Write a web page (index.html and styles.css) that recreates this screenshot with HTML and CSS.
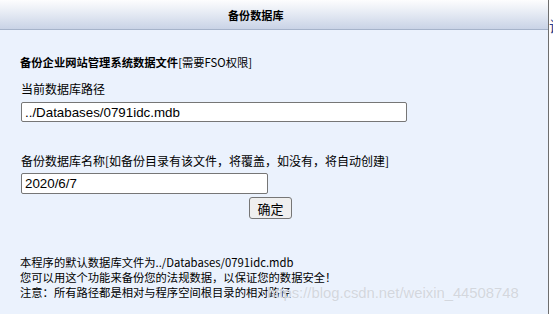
FILE: index.html
```
<!DOCTYPE html>
<html lang="zh-CN">
<head>
<meta charset="utf-8">
<title>备份数据库</title>
<link rel="stylesheet" href="styles.css">
</head>
<body>
<div class="frame">
  <div class="page">
    <div class="header"><span class="title">备份数据库</span></div>
    <div class="content">
      <div class="line"><b>备份企业网站管理系统数据文件</b>[需要FSO权限]</div>
      <div class="line label label1">当前数据库路径</div>
      <input class="field path" type="text" value="../Databases/0791idc.mdb">
      <div class="line label label2">备份数据库名称[如备份目录有该文件，将覆盖，如没有，将自动创建]</div>
      <input class="field name" type="text" value="2020/6/7">
      <div class="actions"><button class="btn" type="button">确定</button></div>
      <div class="notes">
        <div>本程序的默认数据库文件为../Databases/0791idc.mdb</div>
        <div>您可以用这个功能来备份您的法规数据，以保证您的数据安全！</div>
        <div>注意：所有路径都是相对与程序空间根目录的相对路径</div>
      </div>
    </div>
  </div>
  <div class="edge"><span class="edge-glyph">说</span></div>
</div>
<div class="watermark">https://blog.csdn.net/weixin_44508748</div>
</body>
</html>
```
FILE: styles.css
```
html, body {
  margin: 0;
  padding: 0;
  background: #ffffff;
  height: 314px;
  overflow: hidden;
}
body {
  font-family: "Noto Sans CJK SC", "Liberation Sans", sans-serif;
  font-size: 11.3px;
  color: #000;
  position: relative;
}
.frame {
  display: flex;
  height: 314px;
}
.page {
  width: 548px;
  flex: none;
  height: 314px;
  border-right: 1px solid #6e6e6e;
  display: flex;
  flex-direction: column;
}
.edge {
  width: 4px;
  overflow: hidden;
  padding-top: 17px;
  flex: none;
}
.edge-glyph {
  display: block;
  font-size: 15px;
  line-height: 18px;
  color: #2a3f8a;
  white-space: nowrap;
}
.header {
  height: 29px;
  border-bottom: 1px solid #a6b3ca;
  background: linear-gradient(to bottom, #fdfdfe 0%, #e6ebf4 45%, #c9d3e6 100%);
  display: flex;
  align-items: center;
  padding-left: 228px;
  font-weight: bold;
  font-size: 11.1px;
  line-height: 16px;
}
.content {
  flex: 1;
  background: #ebf2fd;
  padding: 24px 0 0 20px;
  display: flex;
  flex-direction: column;
  align-items: flex-start;
}
.line {
  line-height: 16px;
  white-space: nowrap;
}
.label {
  font-size: 12px;
  margin-left: 1px;
}
.label1 { margin-top: 11px; }
.label2 { margin-top: 31px; }
.field {
  box-sizing: border-box;
  margin: 0;
  font-family: "Liberation Sans", Arial, sans-serif;
  font-size: 13.33px;
  color: #000;
  background: #fff;
  border: 1px solid #767676;
  border-radius: 2px;
  padding: 0 3px;
  margin-left: 1px;
}
.path {
  margin-top: 5px;
  width: 386px;
  height: 20px;
}
.name {
  margin-top: 4px;
  width: 247px;
  height: 21px;
}
.actions {
  margin-top: 3px;
  padding-left: 229px;
}
.btn {
  box-sizing: border-box;
  width: 43px;
  height: 22px;
  margin: 0;
  padding: 0;
  font-family: "Noto Sans CJK SC", sans-serif;
  font-size: 13px;
  color: #000;
  background: #efefef;
  border: 1px solid #767676;
  border-radius: 3px;
}
.notes {
  margin-top: 36px;
  line-height: 15px;
  white-space: nowrap;
}
.watermark {
  position: absolute;
  left: 267px;
  top: 285px;
  font-family: "Liberation Sans", Arial, sans-serif;
  font-size: 14.8px;
  line-height: 17px;
  color: #d3d7de;
  text-shadow: 0 0 1px #f5f8fd;
  white-space: nowrap;
}
```
